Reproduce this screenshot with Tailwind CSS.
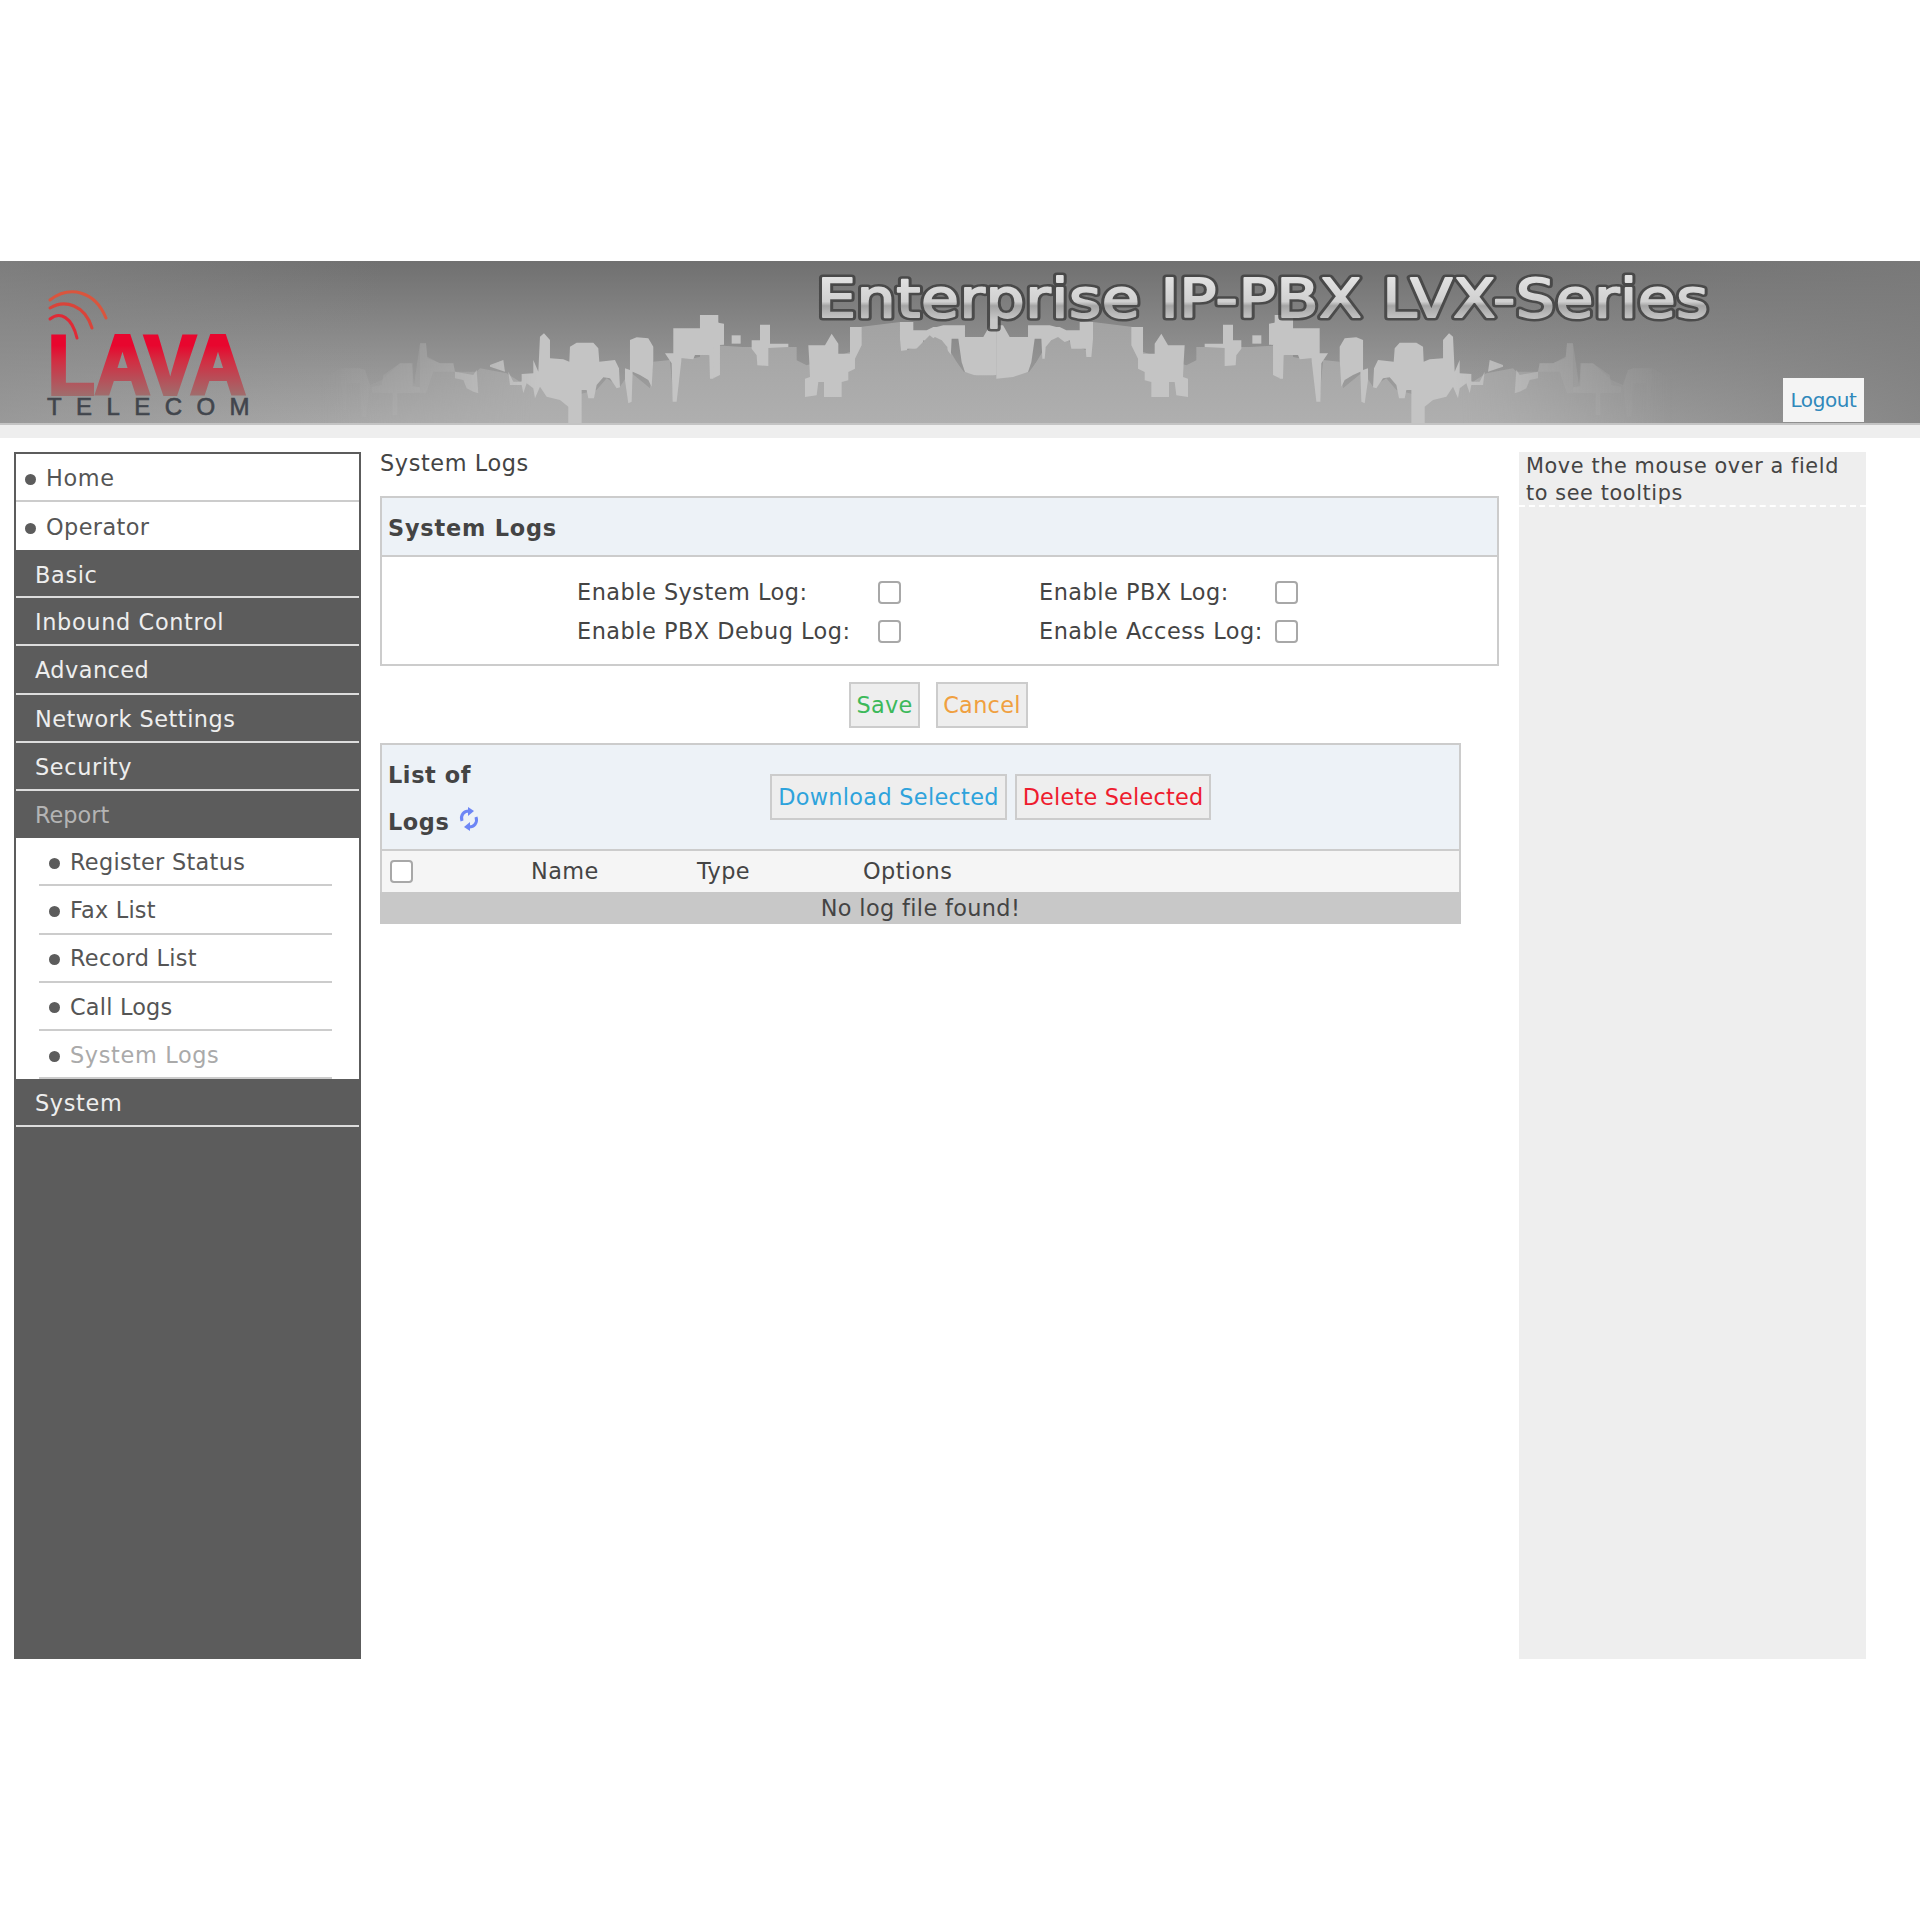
<!DOCTYPE html>
<html lang="en">
<head>
    <meta charset="UTF-8">
    <title>System Logs</title>
    <script src="https://cdn.jsdelivr.net/npm/@tailwindcss/browser@4"></script>
</head>
<body class="bg-white text-[#444] font-['DejaVu_Sans',sans-serif] text-[22.4px] tracking-[0.5px]">

<div class="w-[1920px] h-[1920px] pt-[261px]">

    <!-- Header banner -->
    <div class="relative h-[164px]">
        <svg class="block" width="1920" height="164" viewBox="0 0 1920 164">
            <defs>
                <linearGradient id="bgv" x1="0" y1="0" x2="0" y2="1">
                    <stop offset="0" stop-color="#707070"/>
                    <stop offset="1" stop-color="#a9a9a9"/>
                </linearGradient>
                <linearGradient id="bgr" x1="0" y1="0" x2="1" y2="0">
                    <stop offset="0.75" stop-color="#7c7c7c" stop-opacity="0"/>
                    <stop offset="1" stop-color="#7c7c7c" stop-opacity="0.75"/>
                </linearGradient>
                <linearGradient id="bgl" x1="0" y1="0" x2="1" y2="0">
                    <stop offset="0" stop-color="#8a8a8a" stop-opacity="0.5"/>
                    <stop offset="0.2" stop-color="#8a8a8a" stop-opacity="0"/>
                </linearGradient>
                <linearGradient id="fade" gradientUnits="userSpaceOnUse" x1="320" y1="0" x2="1100" y2="0">
                    <stop offset="0" stop-color="#fff" stop-opacity="0"/>
                    <stop offset="0.12" stop-color="#fff" stop-opacity="0.4"/>
                    <stop offset="0.28" stop-color="#fff" stop-opacity="1"/>
                </linearGradient>
                <mask id="fadeMask" maskUnits="userSpaceOnUse" x="0" y="0" width="1200" height="164">
                    <rect x="0" y="0" width="1200" height="164" fill="url(#fade)"/>
                </mask>
                <linearGradient id="body1" gradientUnits="userSpaceOnUse" x1="0" y1="3" x2="0" y2="375">
                    <stop offset="0" stop-color="#a0a0a0"/>
                    <stop offset="1" stop-color="#afafaf"/>
                </linearGradient>
                <linearGradient id="body2" gradientUnits="userSpaceOnUse" x1="0" y1="117" x2="0" y2="489">
                    <stop offset="0" stop-color="#a0a0a0"/>
                    <stop offset="1" stop-color="#afafaf"/>
                </linearGradient>
                <linearGradient id="title" x1="0" y1="0" x2="0" y2="1">
                    <stop offset="0.15" stop-color="#e2e2e2"/>
                    <stop offset="0.55" stop-color="#d0d0d0"/>
                    <stop offset="0.62" stop-color="#a4a4a4"/>
                    <stop offset="0.85" stop-color="#c8c8c8"/>
                </linearGradient>
                <linearGradient id="lava" gradientUnits="userSpaceOnUse" x1="0" y1="72" x2="0" y2="134">
                    <stop offset="0.2" stop-color="#e8062e"/>
                    <stop offset="0.42" stop-color="#d42a40"/>
                    <stop offset="1" stop-color="#a06c6c"/>
                </linearGradient>
                <g id="skyline">
                    <!-- city body, traced from the left half -->
                    <g transform="translate(320 39) scale(0.3333)">
                        <path fill="url(#body1)" d="M0 240L60 205L120 205L135 210L150 255L185 240L240 190L275 190L282 255L300 130L318 130L322 170L360 190L400 190L405 215L470 215L480 205L560 220L600 245L640 225L730 300L790 280L830 270L860 235L900 260L930 215L990 265L1000 185L1050 180L1060 290L1085 175L1120 175L1170 165L1200 140V375H0Z"/>
                    </g>
                    <g transform="translate(700 1) scale(0.3333)">
                        <path fill="url(#body2)" d="M0 250L45 250L130 255L290 255L290 295L320 310L450 270L480 195L600 180L620 265L680 240L705 215L740 250L770 300L790 330L900 340L980 340L1040 260L1090 220L1130 260L1200 270V489H0Z"/>
                    </g>
                    <!-- lighter buildings on top -->
                    <g transform="translate(320 39) scale(0.3333)" fill="#c4c4c4">
                        <path opacity="0.35" d="M300 130L318 130L322 175L360 190L400 190L405 215L340 215L318 280L300 280Z"/>
                        <path opacity="0.5" d="M155 260L185 255L190 225L240 190L278 190L278 258L300 262L300 278L232 280L232 345L218 345L218 280L155 278Z"/>
                        <path opacity="0.4" d="M65 205L118 205L135 210L150 255L138 350L125 350L120 250L80 250L78 330L70 330L65 250Z"/>
                        <path d="M405 215L460 225L470 210L475 280L460 275L440 265L430 240L405 235Z"/>
                        <path d="M510 195L550 180L555 215L510 200Z"/>
                        <path d="M565 215L580 245L605 245L605 222L640 220L640 180L655 215L660 110L672 100L690 120L690 175L730 178L748 185L750 140L770 128L820 128L835 145L838 185L885 180L897 205L900 262L890 265L870 235L850 232L830 255L822 295L805 295L800 270L785 270L785 375L745 375L745 320L720 300L680 290L660 260L645 295L640 265L620 250L610 280L605 255L570 255Z"/>
                        <path d="M915 205L930 210L930 120L950 112L985 115L1000 140L1000 180L995 260L985 240L960 225L938 215L935 305L925 310L915 240Z"/>
                        <path d="M1035 160L1060 160L1060 85L1140 85L1140 45L1195 45L1195 135L1200 135L1200 225L1180 235L1170 165L1125 165L1120 178L1085 175L1070 305L1058 305L1055 190Z"/>
                    </g>
                    <g transform="translate(700 1) scale(0.3333)" fill="#c4c4c4">
                        <path d="M0 165L50 160L55 182L72 185L72 248L42 250L40 350L30 350L28 280L0 275Z"/>
                        <path d="M95 220L122 220L122 245L95 245Z"/>
                        <path d="M155 235L180 235L180 188L210 188L210 245L265 245L265 255L205 258L205 312L172 310L170 280L155 260Z"/>
                        <path d="M325 250L375 250L395 215L415 245L415 275L450 275L450 195L485 195L485 250L465 290L465 320L445 330L445 355L425 360L425 405L372 405L372 360L355 360L350 400L315 405L315 350L330 345L328 300Z"/>
                        <path d="M600 180L640 180L640 205L680 205L700 195L710 195L730 190L795 190L795 225L850 225L870 190L890 190L890 350L840 345L795 330L785 300L775 230L755 230L752 290L745 290L742 255L725 235L705 225L685 240L670 235L665 260L622 260L620 285L605 285L600 230Z"/>
                    </g>
                </g>
            </defs>
            <rect width="1920" height="164" fill="url(#bgv)"/>
            <rect width="1920" height="164" fill="url(#bgr)"/>
            <rect width="1920" height="164" fill="url(#bgl)"/>
            <g mask="url(#fadeMask)"><use href="#skyline"/></g>
            <g transform="matrix(-1 0 0 1 1993 0)">
                <g mask="url(#fadeMask)"><use href="#skyline"/></g>
            </g>
            <rect y="162" width="1920" height="2" fill="#c4c4c4"/>

            <!-- page title in the banner -->
            <text x="817" y="56" textLength="892" lengthAdjust="spacingAndGlyphs" font-family="DejaVu Sans" font-size="53" fill="#3e3e3e" stroke="#3e3e3e" stroke-width="7" stroke-linejoin="round" opacity="0.8">Enterprise IP-PBX LVX-Series</text>
            <text x="817" y="56" textLength="892" lengthAdjust="spacingAndGlyphs" font-family="DejaVu Sans" font-size="53" fill="url(#title)" stroke="url(#title)" stroke-width="1.8" stroke-linejoin="round">Enterprise IP-PBX LVX-Series</text>

            <!-- logo -->
            <g fill="none" stroke-linecap="round" stroke-width="3">
                <path stroke="#d9553e" d="M50 39C70 24 95 30 106 57"/>
                <path stroke="#d9443a" d="M50 47C65 38 85 44 92 67"/>
                <path stroke="#e02a36" d="M50 58C60 50 72 56 77 77"/>
            </g>
            <text x="48" y="133" textLength="198" lengthAdjust="spacingAndGlyphs" font-family="Liberation Sans" font-weight="700" font-size="84" fill="url(#lava)" stroke="url(#lava)" stroke-width="4" stroke-linejoin="miter">LAVA</text>
            <text x="47" y="154" textLength="203" font-family="Liberation Sans" font-size="24" fill="#41454c" stroke="#41454c" stroke-width="0.6">TELECOM</text>
        </svg>
        <a class="absolute left-[1783px] top-[117px] w-[81px] h-[44px] bg-[#f4f4f4] flex items-center justify-center text-[20px] tracking-[-0.4px] text-[#2f88bb]">Logout</a>
    </div>
    <div class="h-[13px] bg-[#eeeeee]"></div>

    <div class="flex pt-[14px] pl-[14px]">

        <!-- Left menu -->
        <div class="w-[347px] h-[1207px] bg-[#5c5c5c] border-2 border-b-0 border-[#5c5c5c] leading-none tracking-[0.65px]">
            <div class="bg-white">
                <div class="h-[48px] pt-[2px] flex items-center pl-[9px] border-b-2 border-[#cccccc] text-[#555]"><span class="w-[11px] h-[11px] rounded-full bg-[#5c5c5c] mr-[9px] mt-[2px]"></span><span class="ml-[1px]">Home</span></div>
                <div class="h-[48px] pt-[2px] flex items-center pl-[9px] text-[#555] tracking-[0.4px]"><span class="w-[11px] h-[11px] rounded-full bg-[#5c5c5c] mr-[9px] mt-[2px]"></span><span class="ml-[1px]">Operator</span></div>
            </div>
            <div class="h-[48px] pt-[2px] flex items-center pl-[19px] border-t-2 border-b-2 border-t-[#5c5c5c] border-b-[#dddddd] text-[#eeeeee]">Basic</div>
            <div class="h-[48.3px] pt-[2px] flex items-center pl-[19px] border-b-2 border-[#dddddd] text-[#eeeeee]">Inbound Control</div>
            <div class="h-[48.3px] pt-[2px] flex items-center pl-[19px] border-b-2 border-[#dddddd] text-[#eeeeee] tracking-[0.45px]">Advanced</div>
            <div class="h-[48.3px] pt-[2px] flex items-center pl-[19px] border-b-2 border-[#dddddd] text-[#eeeeee] tracking-[0.5px]">Network Settings</div>
            <div class="h-[48.3px] pt-[2px] flex items-center pl-[19px] border-b-2 border-[#dddddd] text-[#eeeeee]">Security</div>
            <div class="h-[47px] pt-[2px] flex items-center pl-[19px] text-[#b4b4b4] tracking-[0px]">Report</div>
            <div class="bg-white h-[241px] pl-[23px] pr-[27px] text-[#555]">
                <div class="h-[48.2px] pt-[2px] flex items-center pl-[10px] border-b-2 border-[#cccccc] tracking-[0.3px]"><span class="w-[11px] h-[11px] rounded-full bg-[#5c5c5c] mr-[9px] mt-[2px]"></span><span class="ml-[1px]">Register Status</span></div>
                <div class="h-[48.2px] pt-[2px] flex items-center pl-[10px] border-b-2 border-[#cccccc] tracking-[0.2px]"><span class="w-[11px] h-[11px] rounded-full bg-[#5c5c5c] mr-[9px] mt-[2px]"></span><span class="ml-[1px]">Fax List</span></div>
                <div class="h-[48.2px] pt-[2px] flex items-center pl-[10px] border-b-2 border-[#cccccc] tracking-[0.3px]"><span class="w-[11px] h-[11px] rounded-full bg-[#5c5c5c] mr-[9px] mt-[2px]"></span><span class="ml-[1px]">Record List</span></div>
                <div class="h-[48.2px] pt-[2px] flex items-center pl-[10px] border-b-2 border-[#cccccc] tracking-[0.2px]"><span class="w-[11px] h-[11px] rounded-full bg-[#5c5c5c] mr-[9px] mt-[2px]"></span><span class="ml-[1px]">Call Logs</span></div>
                <div class="h-[48.2px] pt-[2px] flex items-center pl-[10px] border-b-2 border-[#cccccc] text-[#aaaaaa]"><span class="w-[11px] h-[11px] rounded-full bg-[#5c5c5c] mr-[9px] mt-[2px]"></span><span class="ml-[1px]">System Logs</span></div>
            </div>
            <div class="h-[48px] pt-[2px] flex items-center pl-[19px] border-b-2 border-[#dddddd] text-[#eeeeee]">System</div>
        </div>

        <!-- Main content -->
        <div class="w-[1119px] ml-[19px]">
            <div class="h-[44px] leading-[22px] tracking-[0.6px]">System Logs</div>

            <div class="border-2 border-[#cccccc] h-[170px]">
                <div class="h-[59px] pt-[4px] bg-[#edf2f7] border-b-2 border-[#cccccc] flex items-center pl-[6px] font-bold tracking-[0.8px]">System Logs</div>
                <div class="pl-[195px] pt-[16px]">
                    <div class="flex items-center h-[39px]">
                        <span class="w-[301px]">Enable System Log:</span>
                        <input type="checkbox" class="appearance-none w-[23px] h-[23px] rounded-[4px] border-2 border-[#a8a8a8] bg-white">
                        <span class="w-[236px] ml-[138px]">Enable PBX Log:</span>
                        <input type="checkbox" class="appearance-none w-[23px] h-[23px] rounded-[4px] border-2 border-[#a8a8a8] bg-white">
                    </div>
                    <div class="flex items-center h-[39px]">
                        <span class="w-[301px]">Enable PBX Debug Log:</span>
                        <input type="checkbox" class="appearance-none w-[23px] h-[23px] rounded-[4px] border-2 border-[#a8a8a8] bg-white">
                        <span class="w-[236px] ml-[138px]">Enable Access Log:</span>
                        <input type="checkbox" class="appearance-none w-[23px] h-[23px] rounded-[4px] border-2 border-[#a8a8a8] bg-white">
                    </div>
                </div>
            </div>

            <div class="flex gap-[16px] pl-[469px] pt-[16px] tracking-[0.3px]">
                <button class="h-[46px] w-[71px] pt-[2px] bg-[#eeeeee] border-2 border-[#cccccc] text-[#3cb95a]">Save</button>
                <button class="h-[46px] w-[92px] pt-[2px] bg-[#eeeeee] border-2 border-[#cccccc] text-[#f0a040]">Cancel</button>
            </div>

            <div class="w-[1081px] mt-[15px]">
                <div class="h-[108px] bg-[#edf2f7] border-2 border-[#cccccc] flex items-center pl-[6px]">
                    <div class="w-[382px] mt-[3px] leading-[47px] font-bold tracking-[0.6px]">
                        <div>List of</div>
                        <div class="flex items-center">Logs
                            <svg class="ml-[9px] -mt-[6px]" width="22" height="24" viewBox="0 0 22 24" fill="none" stroke="#6d86f5" stroke-width="3">
                                <path d="M4 14C2 8 6 4 11 4"/>
                                <path d="M18 10C20 16 16 20 11 20"/>
                                <path fill="#6d86f5" stroke="none" d="M10 0L16 4L10 9Z"/>
                                <path fill="#6d86f5" stroke="none" d="M12 15L6 20L12 24Z"/>
                            </svg>
                        </div>
                    </div>
                    <button class="h-[46px] w-[237px] pt-[2px] bg-[#eeeeee] border-2 border-[#cccccc] text-[#2ea3dc] tracking-[0.3px]">Download Selected</button>
                    <button class="h-[46px] w-[196px] pt-[2px] ml-[8px] bg-[#eeeeee] border-2 border-[#cccccc] text-[#ee1c2e] tracking-[0.2px]">Delete Selected</button>
                </div>
                <div class="h-[41px] bg-[#f5f5f5] flex items-center border-l-2 border-r-2 border-[#cccccc] pl-[8px] tracking-[0.4px]">
                    <input type="checkbox" class="appearance-none w-[23px] h-[23px] rounded-[4px] border-2 border-[#a8a8a8] bg-white">
                    <span class="w-[166px] ml-[118px]">Name</span>
                    <span class="w-[166px]">Type</span>
                    <span>Options</span>
                </div>
                <div class="h-[32px] bg-[#c8c8c8] text-center leading-[32px] tracking-[0.35px]">No log file found!</div>
            </div>
        </div>

        <!-- Tooltip panel -->
        <div class="w-[347px] h-[1207px] ml-[20px] bg-[#eeeeee]">
            <div class="h-[55px] px-[7px] pt-[1px] border-b-2 border-dashed border-white text-[20.8px] leading-[27px] tracking-[0.6px]">Move the mouse over a field to see tooltips</div>
        </div>
    </div>
</div>

</body>
</html>
